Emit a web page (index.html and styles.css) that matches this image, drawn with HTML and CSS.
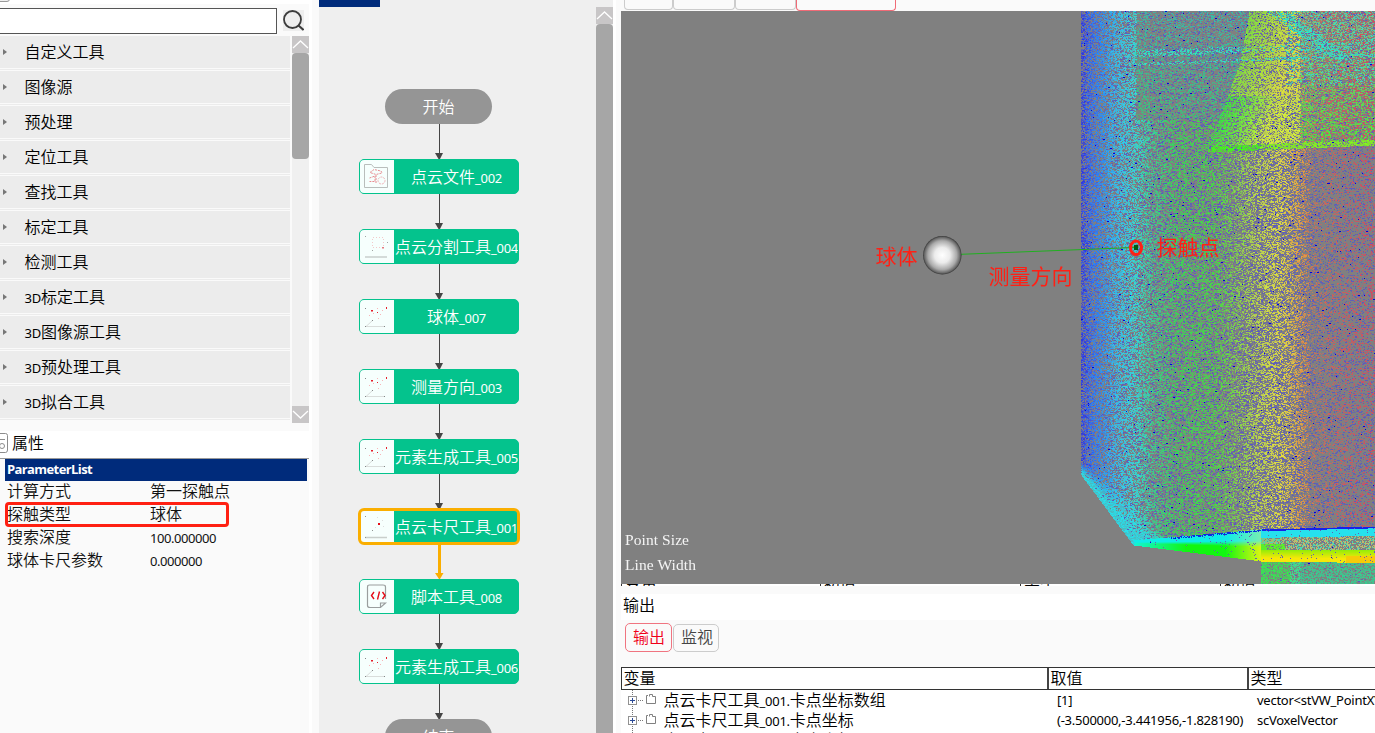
FILE: index.html
```html
<!DOCTYPE html>
<html lang="zh-CN">
<head>
<meta charset="utf-8">
<title>点云卡尺工具</title>
<link rel="stylesheet" href="styles.css">
</head>
<body>
<svg class="defs" width="0" height="0">
  <symbol id="i-axes" viewBox="0 0 34 33">
    <path d="M6 26.500H25M6 26.500L12.500 20.500" fill="none" stroke="#d9dddb"/>
    <path d="M5 8h1v1H5zM12 20h1v1h-1zM24 26h1v1h-1zM5 26h1v1H5z" fill="#848887"/>
    <path d="M11 10h2v1.500h-2zM26 7h1v2h-1zM17 12h1v1h-1z" fill="#e5202c"/>
    <path d="M17 8h1v1h-1zM9 15h1v1H9zM13 13h1v1h-1zM20 14h1v1h-1zM18 18h1v1h-1zM22 10h1v1h-1z" fill="#f7b5b8"/>
  </symbol>
  <symbol id="i-segment" viewBox="0 0 34 33">
    <path d="M5 27H27" stroke="#c9cfcc" stroke-width="1.500"/>
    <path d="M13 7.500H23.500V17.500H12.500V8" fill="none" stroke="#f3c9ca" stroke-dasharray="1 2"/>
    <path d="M5 6h1v1H5zM12 20h1v1h-1zM27 12h1v1h-1z" fill="#a0a5a3"/>
    <path d="M22 17h2v1.500h-2z" fill="#e77a80"/>
  </symbol>
  <symbol id="i-caliper" viewBox="0 0 34 33">
    <path d="M5 27.500H27" stroke="#c9cfcc" stroke-width="1.300"/>
    <path d="M5 6h1v1H5zM12 20h1v1h-1zM5 27h1v1H5z" fill="#909593"/>
    <path d="M18 13h2v2h-2z" fill="#e20d18"/>
    <path d="M17 7h1v1h-1zM22 10h1v1h-1zM15 17h1v1h-1zM23 16h1v1h-1z" fill="#dcdede"/>
  </symbol>
  <symbol id="i-file" viewBox="0 0 34 33">
    <path d="M5 4.500H11.500L14 7.500H27.500V27.500H4.500V4.500Z" fill="none" stroke="#b9bebc"/>
    <path d="M10 12.500L14 9.500L21 11L22 13L16 14.500L10 12.500M16 15V23M9.500 18L15 16V21.500H9.500" fill="none" stroke="#e78b90" stroke-dasharray="2 1"/>
    <circle cx="21.500" cy="20.500" r="3.500" fill="none" stroke="#f0b0b4" stroke-dasharray="2 1"/>
  </symbol>
  <symbol id="i-script" viewBox="0 0 34 33">
    <path d="M25.500 19V7Q25.500 5 23 5H9.500Q7.500 5 7.500 7V25.500Q7.500 27.500 10 27.500H20.500L25.500 23H20.500V27.500" fill="none" stroke="#9a9e9e" stroke-width="1.200"/>
    <path d="M14 12L11.500 15.500L14 19M19.500 11.500L17.500 19.500M22.500 12L25 15.500L22.500 19" fill="none" stroke="#e50b16" stroke-width="1.400"/>
  </symbol>
  <symbol id="i-link" viewBox="0 0 12 35">
    <path d="M6.500 0V30" stroke="#454545"/>
    <path d="M2 29H10L7 35H5.500Z" fill="#454545"/>
  </symbol>
  <symbol id="i-link-active" viewBox="0 0 12 35">
    <path d="M6.500 0V31" stroke="#faae00" stroke-width="3"/>
    <path d="M2 29H10.500L7 35H6Z" fill="#faae00"/>
  </symbol>
  <symbol id="i-up" viewBox="0 0 17 17"><path d="M1 12L8.500 5L16 12" fill="none" stroke="#fff" stroke-width="1.300"/></symbol>
  <symbol id="i-down" viewBox="0 0 17 17"><path d="M1 5L8.500 12L16 5" fill="none" stroke="#fff" stroke-width="1.300"/></symbol>
  <symbol id="i-expand" viewBox="0 0 30 20">
    <rect x=".500" y="6.500" width="8" height="8" fill="#fff" stroke="#919191"/>
    <path d="M2 10.500H7M4.500 8V13" stroke="#2b4a96"/>
    <path d="M10 10.500H16M4.500 16V20M4.500 0V6" stroke="#777" stroke-dasharray="1 1"/>
    <path d="M20 5.500H18.500V13.500H27.500V6.500H24.500V4.500H21.500V6.500" fill="none" stroke="#808080"/>
  </symbol>
</svg>
<div class="app">
  <aside class="left">
    <div class="search"><i class="stub"></i><div class="search-box"></div>
      <svg class="search-icon" width="21" height="21" viewBox="0 0 21 21"><circle cx="9.500" cy="9.500" r="8.500" fill="none" stroke="#3c3c3c" stroke-width="1.800"/><path d="M15.500 15.500L20.500 20" stroke="#3c3c3c" stroke-width="2"/></svg>
    </div>
    <div class="tools">
      <ul class="tool-list">
        <li>自定义工具</li><li>图像源</li><li>预处理</li><li>定位工具</li><li>查找工具</li><li>标定工具</li><li>检测工具</li>
        <li><span class="lat">3D</span>标定工具</li><li><span class="lat">3D</span>图像源工具</li><li><span class="lat">3D</span>预处理工具</li><li><span class="lat">3D</span>拟合工具</li>
      </ul>
      <div class="scroll"><svg class="sbtn"><use href="#i-up"/></svg><div class="thumb"></div><svg class="sbtn end"><use href="#i-down"/></svg></div>
    </div>
    <div class="props-title">
      <svg width="8" height="20" viewBox="0 0 8 20"><path d="M0 .500H5.500Q7.500 .500 7.500 2.500V17Q7.500 19.500 5.500 19.500H0M0 6.500H5" fill="none" stroke="#8c8c8c"/><circle cx="2" cy="13" r="2.500" fill="none" stroke="#8c8c8c"/></svg>
      <span>属性</span>
    </div>
    <div class="props">
      <div class="props-head">ParameterList</div>
      <dl>
        <dt>计算方式</dt><dd>第一探触点</dd>
        <dt>探触类型</dt><dd>球体</dd>
        <dt>搜索深度</dt><dd class="lat">100.000000</dd>
        <dt>球体卡尺参数</dt><dd class="lat">0.000000</dd>
      </dl>
      <div class="highlight"></div>
    </div>
  </aside>
  <div class="divider"></div>
  <main class="flow">
    <div class="chart">
      <div class="tab-edge"></div>
      <div class="pill">开始</div>
      <svg class="link"><use href="#i-link"/></svg>
      <div class="node"><svg><use href="#i-file"/></svg><b>点云文件<span class="lat">_002</span></b></div>
      <svg class="link"><use href="#i-link"/></svg>
      <div class="node"><svg><use href="#i-segment"/></svg><b>点云分割工具<span class="lat">_004</span></b></div>
      <svg class="link"><use href="#i-link"/></svg>
      <div class="node"><svg><use href="#i-axes"/></svg><b>球体<span class="lat">_007</span></b></div>
      <svg class="link"><use href="#i-link"/></svg>
      <div class="node"><svg><use href="#i-axes"/></svg><b>测量方向<span class="lat">_003</span></b></div>
      <svg class="link"><use href="#i-link"/></svg>
      <div class="node"><svg><use href="#i-axes"/></svg><b>元素生成工具<span class="lat">_005</span></b></div>
      <svg class="link"><use href="#i-link"/></svg>
      <div class="node active"><svg><use href="#i-caliper"/></svg><b>点云卡尺工具<span class="lat">_001</span></b></div>
      <svg class="link"><use href="#i-link-active"/></svg>
      <div class="node"><svg><use href="#i-script"/></svg><b>脚本工具<span class="lat">_008</span></b></div>
      <svg class="link"><use href="#i-link"/></svg>
      <div class="node"><svg><use href="#i-axes"/></svg><b>元素生成工具<span class="lat">_006</span></b></div>
      <svg class="link"><use href="#i-link"/></svg>
      <div class="pill">结束</div>
    </div>
    <div class="flow-scroll"><svg class="sbtn"><use href="#i-up"/></svg><div class="thumb"></div></div>
  </main>
  <section class="right">
    <div class="view-tabs"><i class="t1"></i><i class="t2"></i><i class="t3"></i><i class="t4"></i></div>
    <div class="viewport">
      <canvas id="cloud" width="754" height="573"></canvas>
      <svg class="overlay" width="754" height="573" viewBox="621 11 754 573">
        <defs><radialGradient id="ball"><stop offset="0" stop-color="#fff"/><stop offset=".4" stop-color="#ececec"/><stop offset=".75" stop-color="#aaa"/><stop offset=".93" stop-color="#686868"/><stop offset="1" stop-color="#353535"/></radialGradient></defs>
        <path d="M961 254.300L1134 247.500" stroke="#20b020"/>
        <circle cx="942.300" cy="255.200" r="19.200" fill="url(#ball)"/>
        <rect x="1134" y="245" width="4" height="5" fill="#005c10"/>
        <ellipse cx="1136" cy="247.800" rx="5.500" ry="6.800" fill="none" stroke="#ff2015" stroke-width="3"/>
        <g class="note"><text x="875.500" y="263.500">球体</text><text x="988.500" y="284">测量方向</text><text x="1156.500" y="255">探触点</text></g>
        <g class="hud"><text x="625" y="545" textLength="64">Point Size</text><text x="625" y="570" textLength="71">Line Width</text></g>
      </svg>
    </div>
    <div class="cut-head"><span>变量</span><span>初值</span><span>类型</span><span>初值</span></div>
    <div class="out-title">输出</div>
    <div class="out-tabs"><span class="on">输出</span><span>监视</span></div>
    <div class="grid head"><span>变量</span><span>取值</span><span>类型</span></div>
    <div class="rows">
      <div class="grid row"><span><svg width="30" height="20"><use href="#i-expand"/></svg><em>点云卡尺工具<span class="lat">_001.</span>卡点坐标数组</em></span><span class="lat">[1]</span><span class="lat">vector&lt;stVW_PointXYZ&gt;</span></div>
      <div class="grid row"><span><svg width="30" height="20"><use href="#i-expand"/></svg><em>点云卡尺工具<span class="lat">_001.</span>卡点坐标</em></span><span class="lat">(-3.500000,-3.441956,-1.828190)</span><span class="lat">scVoxelVector</span></div>
      <div class="grid row"><span><svg width="30" height="20"><use href="#i-expand"/></svg><em>点云卡尺工具<span class="lat">_001.</span>卡点坐标</em></span><span></span><span></span></div>
    </div>
  </section>
</div>
<script src="cloud.js"></script>
</body>
</html>
```
FILE: styles.css
```css
* { box-sizing: border-box; }
body { margin: 0; width: 1375px; height: 733px; overflow: hidden; background: #fff; color: #111; font: 16px/20px "Noto Sans CJK SC", sans-serif; font-weight: 350; }
ul, dl, dd { margin: 0; padding: 0; list-style: none; }
.defs { position: absolute; }
.lat { font-family: "Noto Sans", sans-serif; font-weight: 400; font-size: 13px; letter-spacing: -.25px; }
.app { display: grid; grid-template-columns: 312px 7px 302px 754px; height: 733px; }
.left { display: flex; flex-direction: column; width: 309px; background: #fafafa; overflow: hidden; }
.divider { background: #fafafa; }

.search { position: relative; display: flex; height: 36px; padding-top: 8px; gap: 6px; flex: none; background: linear-gradient(#fff 4px, #fafafa 4px); }
.stub { position: absolute; left: -10px; top: -8px; width: 20px; height: 10px; border: 1px solid #999; border-radius: 3px; background: #eee; }
.search-box { width: 277px; height: 26px; border: 1px solid #555; border-left: 0; background: #fff; }
.search-icon { margin-top: 2px; background: #eee; }
.tools { display: flex; height: 387px; gap: 2px; flex: none; }
.tool-list { width: 290px; height: 387px; overflow: hidden; }
.tool-list li { position: relative; height: 35px; padding-left: 24.5px; line-height: 31px; background: linear-gradient(#ececec 32px, #fafafa 32px 33px, #ececec 33px 34px, #fafafa 34px); white-space: nowrap; color: #000; }
.tool-list li:last-child { height: 37px; }
.tool-list li::before { content: ""; position: absolute; left: 3px; top: 13px; border: 3.5px solid transparent; border-left: 4px solid #777; border-right: 0; }
.scroll { display: flex; flex-direction: column; width: 17px; background: #f0f0f0; }
.sbtn { display: block; width: 17px; height: 17px; flex: none; background: #c8c6c7; }
.sbtn.end { margin-top: auto; }
.thumb { height: 106px; border-radius: 4px; background: #a6a6a6; }
.props-title { display: flex; align-items: center; gap: 4px; height: 28px; margin-top: 8px; padding-bottom: 3px; flex: none; background: #fff; border-bottom: 1px solid #999; color: #000; }
.props-title span { line-height: 18px; margin-top: -2px; }
.props { position: relative; padding-left: 5px; }
.props-head { width: 302px; height: 22px; padding-left: 2px; background: #002b7b; color: #fff; font: bold 13px/21px "Open Sans", sans-serif; letter-spacing: -.6px; }
.props dl { display: grid; grid-template-columns: 143px 150px; grid-auto-rows: 23px; padding-left: 2px; line-height: 19px; }
.props .lat { line-height: 22px; letter-spacing: -.45px; }
.highlight { position: absolute; left: 5px; top: 43px; width: 224px; height: 25px; border: 3px solid #ff2012; border-radius: 4px; }

.flow { display: flex; width: 294px; background: #efefef; overflow: hidden; height: 733px; }
.chart { display: flex; flex-direction: column; align-items: center; width: 277px; padding: 0 37px 0 0; }
.tab-edge { align-self: flex-start; width: 61px; height: 7px; margin-bottom: 82px; background: #002b7b; flex: none; }
.pill { width: 107px; height: 35px; margin-left: -1px; border-radius: 18px; background: #959595; color: #fff; text-align: center; line-height: 34px; flex: none; }
.link { width: 12px; height: 35px; margin-left: 0; flex: none; }
.node { display: flex; width: 160px; height: 35px; flex: none; border: 1px solid #04c38d; border-radius: 5px; background: #04c38d; overflow: hidden; color: #fff; }
.node svg { width: 34px; height: 33px; background: #f6fffd; flex: none; }
.node b { flex: 1; margin-right: -1px; font-weight: 350; text-align: center; line-height: 32px; white-space: nowrap; }
.node.active { outline: 3px solid #faae00; outline-offset: -2px; }
.flow-scroll { width: 17px; padding-top: 7px; display: flex; flex-direction: column; }
.flow-scroll .thumb { height: auto; flex: 1; border-radius: 4px 4px 0 0; }

.right { width: 754px; height: 733px; overflow: hidden; background: #fafafa; box-shadow: -5px 0 #fafafa; }
.view-tabs { display: flex; height: 11px; padding-left: 3px; background: #fafafa; }
.view-tabs i { height: 10px; border: 1px solid #ccc; border-top: 0; border-radius: 0 0 4px 4px; }
.view-tabs .t1 { width: 49px; }
.view-tabs .t2 { width: 62px; }
.view-tabs .t3 { width: 61px; }
.view-tabs .t4 { width: 100px; height: 11px; border-color: #f06a76; }
.viewport { position: relative; height: 573px; background: #808080; }
.viewport canvas { display: block; }
.overlay { position: absolute; left: 0; top: 0; }
.note { fill: #ff2015; font-size: 21px; font-weight: 400; }
.hud { fill: #f4f4f4; font: 15.5px "Liberation Serif", serif; }
.cut-head { display: grid; grid-template-columns: 199px 200px 200px 155px; height: 2px; overflow: hidden; background: #fff; }
.cut-head span { display: flex; align-items: flex-end; height: 2px; padding-left: 3px; border-left: 1px solid #333; line-height: 8px; overflow: hidden; color: #000; }
.out-title { height: 26px; margin-top: 8px; padding-left: 2px; background: #fff; line-height: 21px; color: #000; }
.out-tabs { display: flex; align-items: flex-end; gap: 1px; height: 32px; padding-left: 4px; margin-bottom: 15px; }
.out-tabs span { width: 46px; height: 28px; border: 1px solid #ccc; border-radius: 5px; padding-left: 7px; line-height: 23px; color: #444; }
.out-tabs .on { width: 47px; height: 29px; border-color: #f07480; color: #f00018; line-height: 24px; }
.grid { display: grid; grid-template-columns: 427px 200px 127px; }
.head { grid-template-columns: 427px 200px 126px; height: 23px; border: 1px solid #333; border-right: 0; background: #fff; line-height: 18px; color: #000; }
.head span { padding-left: 1.5px; border-right: 2px solid #444; }
.head span:last-child { border: 0; }
.rows { height: 43px; overflow: hidden; background: #fff; color: #000; }
.row { height: 20px; white-space: nowrap; }
.row > span { display: block; height: 20px; padding-left: 9px; line-height: 20px; overflow: hidden; }
.row > span:first-child { display: flex; padding-left: 7px; }
.row em { font-style: normal; line-height: 18px; }
.row svg { margin-right: 5.5px; flex: none; }
.row > .lat { line-height: 20px; }
```
FILE: cloud.js
```js
const canvas = document.getElementById('cloud');
const ctx = canvas.getContext('2d');
const OX = 621, OY = 11, W = 754, H = 573;
const img = ctx.createImageData(W, H);
let seed = 90210;
function rnd() {
  seed = (seed + 0x6D2B79F5) | 0;
  let t = Math.imul(seed ^ (seed >>> 15), 1 | seed);
  t = (t + Math.imul(t ^ (t >>> 7), 61 | t)) ^ t;
  return ((t ^ (t >>> 14)) >>> 0) / 4294967296;
}
const lerp = (a, b, t) => a + (b - a) * t;
// x, r, g, b, density
const stops = [
  [1081, 40, 50, 235, .85], [1090, 40, 110, 255, .78], [1103, 35, 150, 255, .72],
  [1116, 45, 195, 245, .76], [1134, 45, 225, 225, .74], [1150, 50, 215, 150, .6],
  [1175, 50, 220, 85, .62], [1215, 65, 225, 65, .62], [1235, 120, 220, 70, .57],
  [1255, 190, 225, 70, .62], [1280, 238, 230, 60, .68], [1292, 232, 190, 65, .62],
  [1302, 238, 150, 60, .62], [1309, 205, 115, 85, .42], [1340, 215, 85, 90, .36],
  [1376, 220, 65, 95, .36]
];
function ramp(x) {
  let i = 0;
  while (i < stops.length - 2 && x > stops[i + 1][0]) i++;
  const a = stops[i], b = stops[i + 1];
  const t = Math.max(0, Math.min(1, (x - a[0]) / (b[0] - a[0])));
  return [1, 2, 3, 4].map(k => lerp(a[k], b[k], t));
}
function bottomEdge(x) {
  if (x < 1133) return 475 + (x - 1081) * 70 / 52;
  if (x < 1261) return 545 + (x - 1133) * 16 / 128;
  return 561 + (x - 1261) * 1.5 / 114;
}
const ridge = y => y < 60 ? 1249 - (y - 11) * .18 : y < 100 ? 1240 - (y - 60) * .35 : 1226 - (y - 100) * .38;
for (let y = OY; y < OY + H; y++) {
  let run = 0, last = null;
  for (let x = OX; x < OX + W; x++) {
    let c = [128, 128, 128];
    const bot = bottomEdge(x);
    if (x >= 1081 && (y < bot || x >= 1261)) {
      let [r, g, b, d] = ramp(x + (rnd() - .5) * 12);
      const shelf = 152 - (x - 1207) * 7 / 168;
      const raised = y < shelf && x > ridge(y);
      if (raised) {
        if (x < 1300) {
          const t = Math.min(1, (x - ridge(y)) / 50);
          r = lerp(125, 230, t); g = 235; b = 55; d = .82;
          if (y > 95) { r *= lerp(.35, .95, t); g = 245; }
        } else {
          const t = Math.min(1, (y - 11) / 130);
          if (rnd() < .62) { r = lerp(130, 80, t); g = lerp(200, 240, t); b = lerp(130, 50, t); }
          d = .74;
        }
        if (y > shelf - 6) { r = x < 1260 ? 60 : 130; g = 255; b = 20; d = .94; }
        const vein = Math.abs(x - (1276 + (y - 11) * 1.35));
        if (y < 60 && vein < 10 && rnd() < .7) { r = 40; g = 240; b = 205; d = .9; }
        else if (x > 1285 && y < 85 && rnd() < .3) { r = 60; g = 230; b = 190; }
      } else if (y < 120 && x > 1135) {
        const t = y / 120;
        r = 50; g = lerp(190, 205, t); b = lerp(180, 120, t);
        d = y < 45 ? .42 : .52;
      }
      const band1 = 53 - (x - 1137) * .035, band2 = 64 - (x - 1137) * .04;
      if (x > 1136 && (Math.abs(y - band1) < 3.5 && rnd() < (x < 1240 ? .6 : .22) || Math.abs(y - band2) < 1.5 && rnd() < .5)) {
        r = 40; g = 235; b = 205; d = .95;
      }
      let glow = 0;
      if (x < 1165) {
        const reach = x < 1133 ? 14 + (x - 1081) * .6 : 45 - (x - 1133) * 1.1;
        glow = Math.max(0, 1 - (bot - y) / reach);
        if (glow > 0) {
          const t = Math.min(1, glow * 1.4);
          r = lerp(r, 35, t); g = lerp(g, 228, t); b = lerp(b, 240, t); d = lerp(d, 1.1, t);
        }
      }
      const top = x < 1261 ? 540 - (x - 1133) * 11 / 128 : 529 - (x - 1261) * 3 / 114;
      const solid = x > 1133 && y >= top && y <= bot;
      let blueShare = x < 1150 ? .22 : x > 1308 ? .5 : .35;
      if (raised) blueShare = .14;
      if (glow > 0) blueShare *= 1 - glow;
      if (solid) {
        const h = (y - top) / (bot - top);
        d = 1.12; blueShare = .03;
        if (x < 1261) {
          const mix = Math.max(0, Math.min(1, (h - .35) * 5));
          const right = Math.max(0, (x - 1225) / 36);
          const low = [lerp(15, 225, right), 250, x < 1185 ? lerp(220, 20, (x - 1133) / 52) : 15];
          const high = [lerp(10, 120, right), 240, lerp(235, 180, right)];
          [r, g, b] = high.map((v, i) => lerp(v, low[i], mix));
          if (y < top + 2 && x > 1170 && rnd() < .7) { r = 10; g = 40; b = 225; }
        } else if (h < .26) { r = 35; g = 228; b = 240; }
        else if (h < .64) {
          const fade = Math.min(1, (x - 1261) / 30);
          d = lerp(1, .62, fade); r = lerp(150, 190, fade); g = 190; b = 110; blueShare = .06;
          if (rnd() < .35) { r = 70; g = 220; b = 180; }
          if (h > .45 && x < 1285) { r = 90; g = 240; b = 40; }
        } else {
          const t = Math.min(1, (h - .64) * 4);
          r = lerp(145, 250, t); g = lerp(240, 235, t); b = 5;
          if (x > 1345 && h > .82) { r = 250; g = 205; }
        }
        if (x > 1261 && h < .05) { r = 20; g = 30; b = 235; }
      } else if (y > bot) {
        r = 50; g = x < 1300 ? 235 : 210; b = x < 1290 ? 80 : 145;
        d = x < 1268 ? .98 : .7; blueShare = .04;
      }
      if (run > 0 && last) { c = last; run--; }
      else if (rnd() < d * .9) {
        let a = solid ? .97 : .55 + rnd() * .43;
        let p = [r, g, b];
        if (rnd() < blueShare) {
          p = [80, 80, 210]; a = .35 + rnd() * .5;
          if (rnd() < .022) { p = [0, 0, 220]; a = 1; }
        }
        c = p.map(v => lerp(128, v, a));
        run = !solid && rnd() < .3 ? 1 : 0;
      }
      last = c;
    } else { run = 0; last = null; }
    const k = ((y - OY) * W + x - OX) * 4;
    img.data[k] = c[0]; img.data[k + 1] = c[1]; img.data[k + 2] = c[2]; img.data[k + 3] = 255;
  }
}
ctx.putImageData(img, 0, 0);
```
